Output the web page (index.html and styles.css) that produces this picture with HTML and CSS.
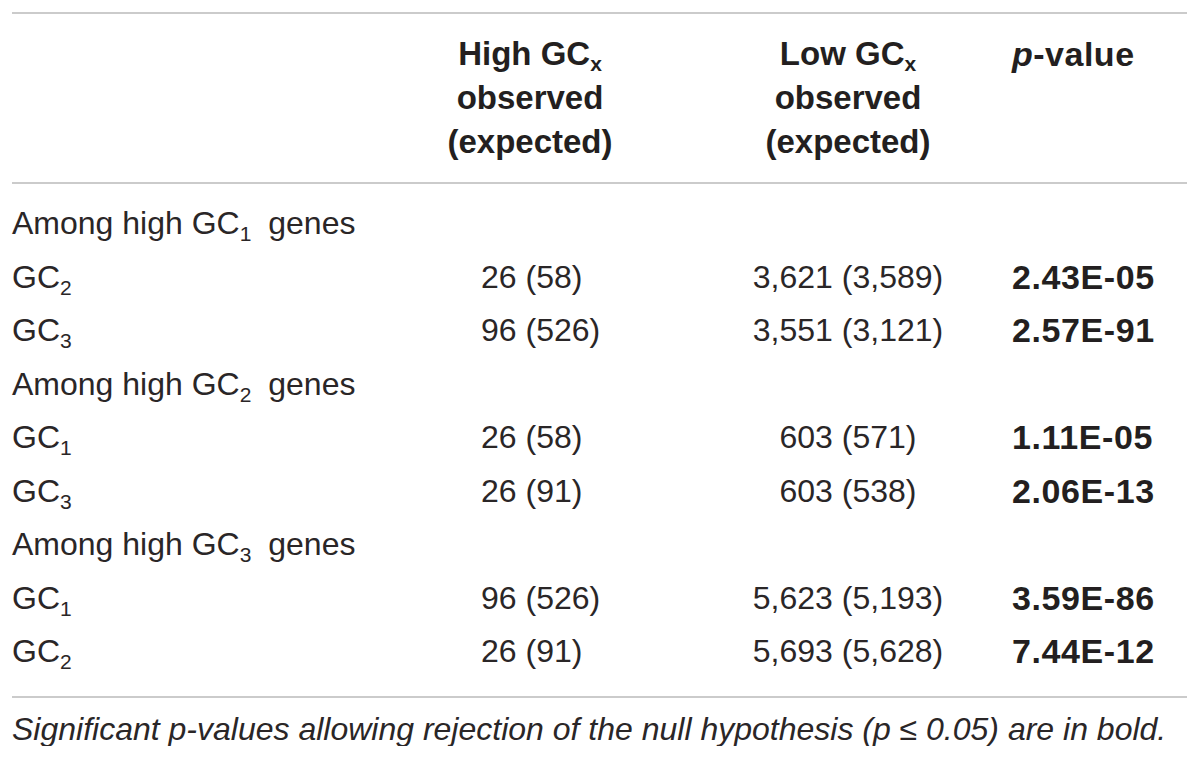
FILE: index.html
```html
<!DOCTYPE html>
<html>
<head>
<meta charset="utf-8">
<link rel="stylesheet" href="styles.css">
</head>
<body>
<div class="page">
  <div class="rule"></div>
  <div class="grid head">
    <div class="c1"></div>
    <div class="c2 hc">High GC<sub>x</sub><br>observed<br>(expected)</div>
    <div class="c3 hc">Low GC<sub>x</sub><br>observed<br>(expected)</div>
    <div class="c4"><i>p</i>-value</div>
  </div>
  <div class="rule"></div>
  <div class="body">
    <div class="grid row"><div class="c1 span">Among high GC<sub>1</sub> genes</div></div>
    <div class="grid row"><div class="c1">GC<sub>2</sub></div><div class="c2">26 (58)</div><div class="c3">3,621 (3,589)</div><div class="c4 b">2.43E-05</div></div>
    <div class="grid row"><div class="c1">GC<sub>3</sub></div><div class="c2">96 (526)</div><div class="c3">3,551 (3,121)</div><div class="c4 b">2.57E-91</div></div>
    <div class="grid row"><div class="c1 span">Among high GC<sub>2</sub> genes</div></div>
    <div class="grid row"><div class="c1">GC<sub>1</sub></div><div class="c2">26 (58)</div><div class="c3">603 (571)</div><div class="c4 b">1.11E-05</div></div>
    <div class="grid row"><div class="c1">GC<sub>3</sub></div><div class="c2">26 (91)</div><div class="c3">603 (538)</div><div class="c4 b">2.06E-13</div></div>
    <div class="grid row"><div class="c1 span">Among high GC<sub>3</sub> genes</div></div>
    <div class="grid row"><div class="c1">GC<sub>1</sub></div><div class="c2">96 (526)</div><div class="c3">5,623 (5,193)</div><div class="c4 b">3.59E-86</div></div>
    <div class="grid row"><div class="c1">GC<sub>2</sub></div><div class="c2">26 (91)</div><div class="c3">5,693 (5,628)</div><div class="c4 b">7.44E-12</div></div>
  </div>
  <div class="rule"></div>
  <p class="note">Significant p-values allowing rejection of the null hypothesis (p &le; 0.05) are in bold.</p>
</div>
</body>
</html>
```
FILE: styles.css
```css
html, body {
  margin: 0;
  padding: 0;
  background: #fff;
}
.page {
  padding: 12px 13px 0 12px;
  font-family: "Liberation Sans", Arial, sans-serif;
  font-size: 32px;
  color: #2a2627;
}
.rule {
  height: 2px;
  background: #cbcbcb;
}
.grid {
  display: grid;
  grid-template-columns: 398px 274px 328px 1fr;
  white-space: nowrap;
}
.head {
  padding: 18px 0 18px;
  font-size: 33px;
  line-height: 44px;
  font-weight: bold;
  color: #231f20;
}
.head .c2 {
  text-align: center;
  padding-right: 34px;
}
.head .c3 {
  text-align: center;
}
.head .c4 {
  font-size: 34px;
  letter-spacing: 0.5px;
}
.head i {
  font-style: italic;
}
.body {
  padding: 13px 0 17.5px;
}
.row {
  line-height: 53.5px;
  height: 53.5px;
}
.span {
  grid-column: 1 / 3;
}
.span sub {
  margin-right: 8px;
}
.row .c2 {
  padding-left: 71px;
}
.row .c3 {
  text-align: center;
}
.b {
  font-weight: bold;
  font-size: 34px;
  letter-spacing: 0.6px;
  color: #231f20;
}
sub {
  font-size: 21px;
  line-height: 0;
  vertical-align: -7px;
}
.head sub {
  font-size: 21px;
  vertical-align: -6px;
}
.note {
  margin: 14px 0 0;
  font-style: italic;
  line-height: 34px;
  white-space: nowrap;
}
```
